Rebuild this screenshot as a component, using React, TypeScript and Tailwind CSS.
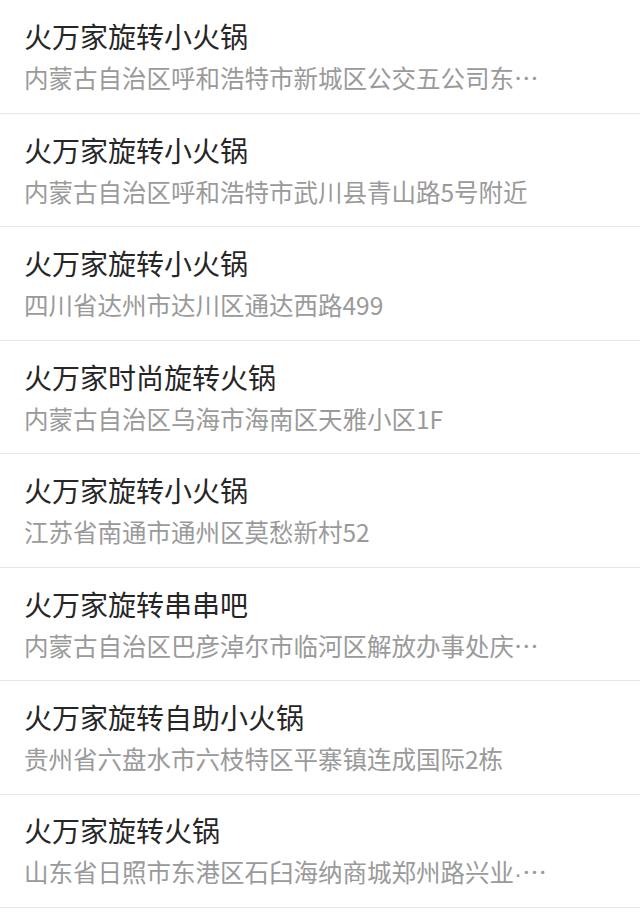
import type { JSX } from "react";

const shops = [
	{ name: "火万家旋转小火锅", address: "内蒙古自治区呼和浩特市新城区公交五公司东…" },
	{ name: "火万家旋转小火锅", address: "内蒙古自治区呼和浩特市武川县青山路5号附近" },
	{ name: "火万家旋转小火锅", address: "四川省达州市达川区通达西路499" },
	{ name: "火万家时尚旋转火锅", address: "内蒙古自治区乌海市海南区天雅小区1F" },
	{ name: "火万家旋转小火锅", address: "江苏省南通市通州区莫愁新村52" },
	{ name: "火万家旋转串串吧", address: "内蒙古自治区巴彦淖尔市临河区解放办事处庆…" },
	{ name: "火万家旋转自助小火锅", address: "贵州省六盘水市六枝特区平寨镇连成国际2栋" },
	{ name: "火万家旋转火锅", address: "山东省日照市东港区石臼海纳商城郑州路兴业", tail: true },
];

export default function App(): JSX.Element {
	return (
		<div className="min-h-[924px] w-[640px] bg-white font-['Noto_Sans_CJK_SC',sans-serif]">
			{shops.map((shop, i) => (
				<div
					className="flex h-[113.5px] flex-col justify-center border-b border-[#e6e6e6] px-6"
					key={i}
				>
					<div className="text-[28px] leading-[36px] text-[#262626]">{shop.name}</div>
					<div className="mt-[8px] text-[24.5px] leading-[32px] text-[#9a9a9a]">
						{shop.address}
						{shop.tail && (
							<>
								<span className="font-['Liberation_Sans',sans-serif]">·</span>…
							</>
						)}
					</div>
				</div>
			))}
		</div>
	);
}
